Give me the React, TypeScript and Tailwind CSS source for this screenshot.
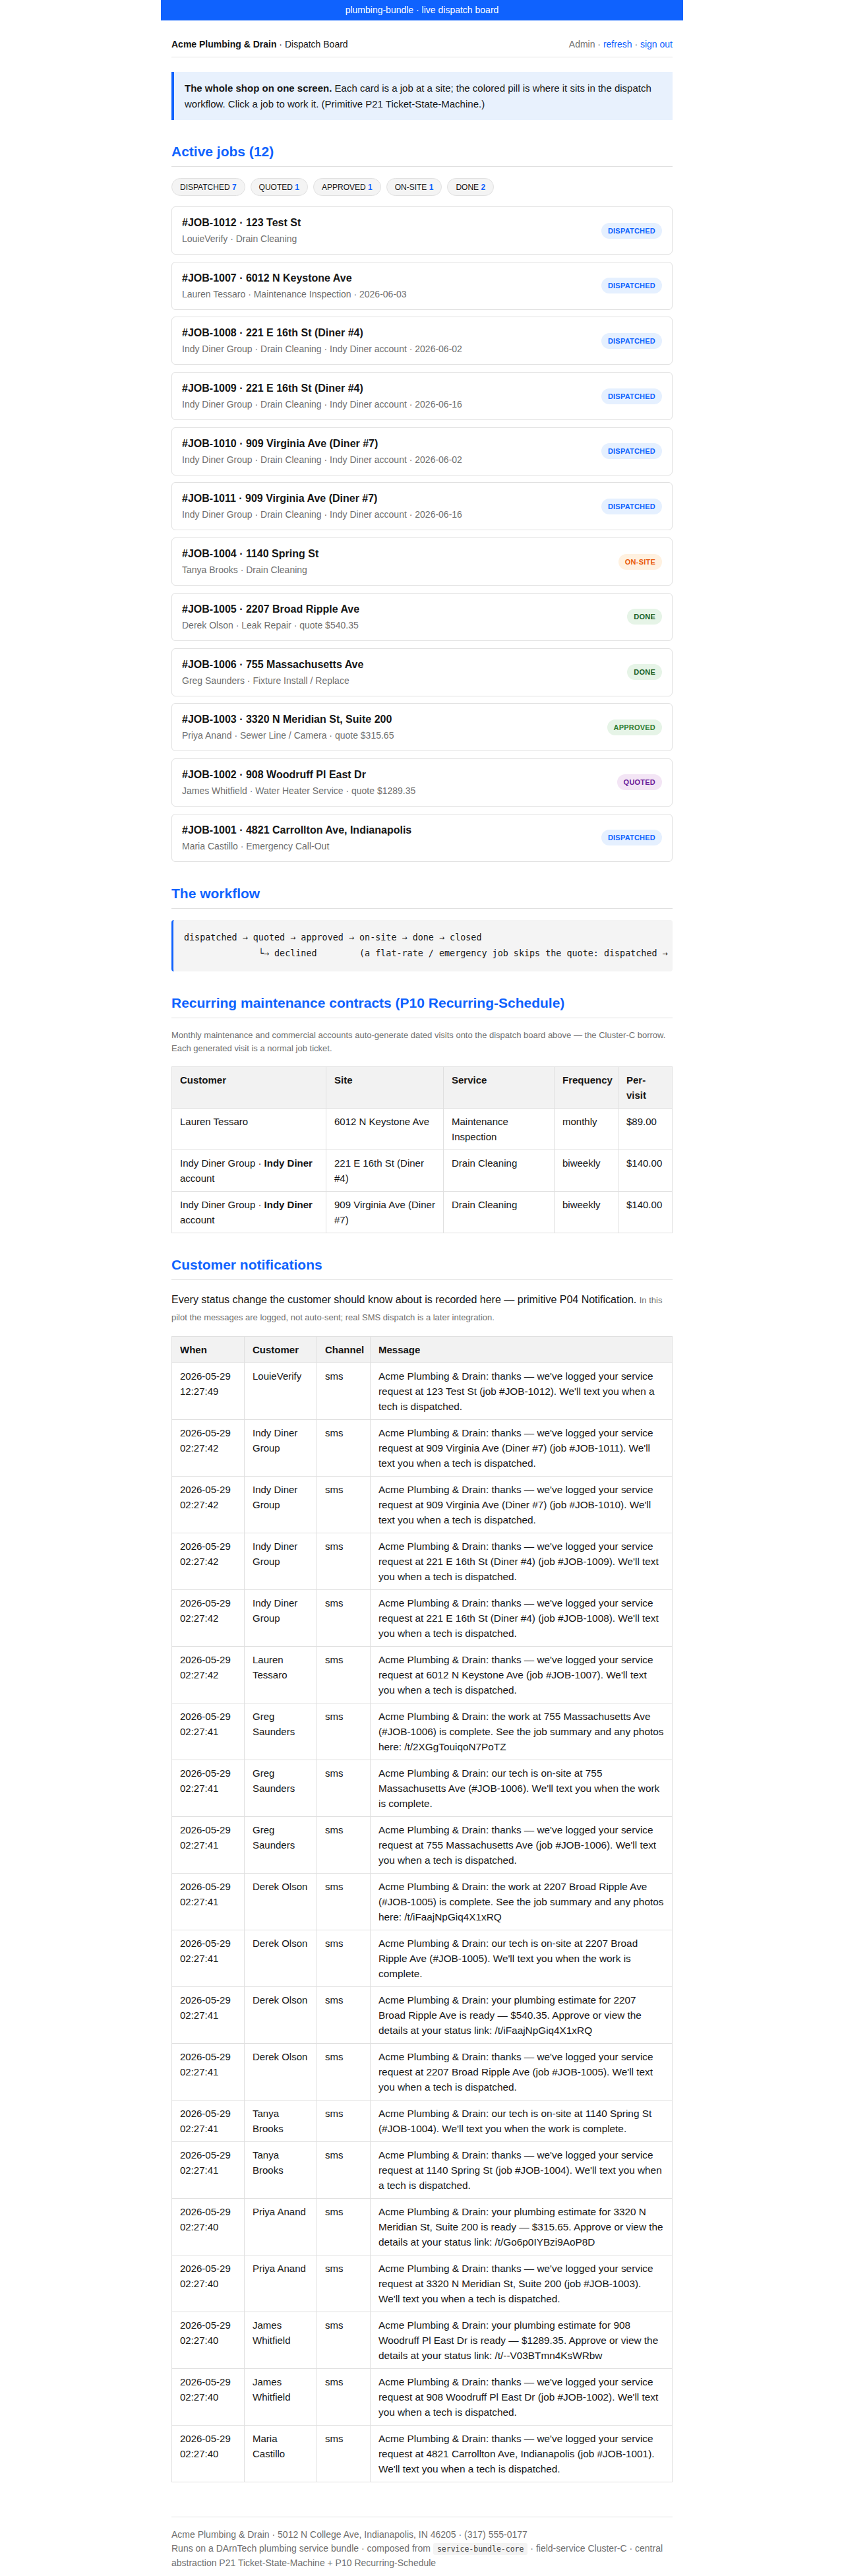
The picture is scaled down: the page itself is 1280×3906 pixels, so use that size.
type Status = 'dispatched' | 'quoted' | 'approved' | 'on-site' | 'done'

interface Job {
  id: string
  site: string
  meta: string
  status: Status
}

interface Contract {
  customer: string
  account?: string
  site: string
  service: string
  frequency: string
  price: string
}

interface Notice {
  when: string
  customer: string
  message: string
}

const pillStyles: Record<Status, string> = {
  dispatched: 'bg-[#e5f0ff] text-[#0f62fe]',
  quoted: 'bg-[#f3e5f5] text-[#6a1b9a]',
  approved: 'bg-[#e6f4e7] text-[#2e7d32]',
  'on-site': 'bg-[#fff1e0] text-[#e8590c]',
  done: 'bg-[#e6f4e7] text-[#1b5e20]',
}

const counts = [
  { label: 'Dispatched', n: 7 },
  { label: 'Quoted', n: 1 },
  { label: 'Approved', n: 1 },
  { label: 'On-site', n: 1 },
  { label: 'Done', n: 2 },
]

const jobs: Job[] = [
  { id: '#JOB-1012', site: '123 Test St', meta: 'LouieVerify · Drain Cleaning', status: 'dispatched' },
  { id: '#JOB-1007', site: '6012 N Keystone Ave', meta: 'Lauren Tessaro · Maintenance Inspection · 2026-06-03', status: 'dispatched' },
  { id: '#JOB-1008', site: '221 E 16th St (Diner #4)', meta: 'Indy Diner Group · Drain Cleaning · Indy Diner account · 2026-06-02', status: 'dispatched' },
  { id: '#JOB-1009', site: '221 E 16th St (Diner #4)', meta: 'Indy Diner Group · Drain Cleaning · Indy Diner account · 2026-06-16', status: 'dispatched' },
  { id: '#JOB-1010', site: '909 Virginia Ave (Diner #7)', meta: 'Indy Diner Group · Drain Cleaning · Indy Diner account · 2026-06-02', status: 'dispatched' },
  { id: '#JOB-1011', site: '909 Virginia Ave (Diner #7)', meta: 'Indy Diner Group · Drain Cleaning · Indy Diner account · 2026-06-16', status: 'dispatched' },
  { id: '#JOB-1004', site: '1140 Spring St', meta: 'Tanya Brooks · Drain Cleaning', status: 'on-site' },
  { id: '#JOB-1005', site: '2207 Broad Ripple Ave', meta: 'Derek Olson · Leak Repair · quote $540.35', status: 'done' },
  { id: '#JOB-1006', site: '755 Massachusetts Ave', meta: 'Greg Saunders · Fixture Install / Replace', status: 'done' },
  { id: '#JOB-1003', site: '3320 N Meridian St, Suite 200', meta: 'Priya Anand · Sewer Line / Camera · quote $315.65', status: 'approved' },
  { id: '#JOB-1002', site: '908 Woodruff Pl East Dr', meta: 'James Whitfield · Water Heater Service · quote $1289.35', status: 'quoted' },
  { id: '#JOB-1001', site: '4821 Carrollton Ave, Indianapolis', meta: 'Maria Castillo · Emergency Call-Out', status: 'dispatched' },
]

const contracts: Contract[] = [
  { customer: 'Lauren Tessaro', site: '6012 N Keystone Ave', service: 'Maintenance Inspection', frequency: 'monthly', price: '$89.00' },
  { customer: 'Indy Diner Group', account: 'Indy Diner', site: '221 E 16th St (Diner #4)', service: 'Drain Cleaning', frequency: 'biweekly', price: '$140.00' },
  { customer: 'Indy Diner Group', account: 'Indy Diner', site: '909 Virginia Ave (Diner #7)', service: 'Drain Cleaning', frequency: 'biweekly', price: '$140.00' },
]

const shop = 'Acme Plumbing & Drain'
const logged = (site: string, job: string) =>
  `${shop}: thanks — we've logged your service request at ${site} (job ${job}). We'll text you when a tech is dispatched.`
const onSite = (site: string, job: string) =>
  `${shop}: our tech is on-site at ${site} (${job}). We'll text you when the work is complete.`
const complete = (site: string, job: string, link: string) =>
  `${shop}: the work at ${site} (${job}) is complete. See the job summary and any photos here: ${link}`
const estimate = (site: string, amount: string, link: string) =>
  `${shop}: your plumbing estimate for ${site} is ready — ${amount}. Approve or view the details at your status link: ${link}`

const notices: Notice[] = [
  { when: '2026-05-29 12:27:49', customer: 'LouieVerify', message: logged('123 Test St', '#JOB-1012') },
  { when: '2026-05-29 02:27:42', customer: 'Indy Diner Group', message: logged('909 Virginia Ave (Diner #7)', '#JOB-1011') },
  { when: '2026-05-29 02:27:42', customer: 'Indy Diner Group', message: logged('909 Virginia Ave (Diner #7)', '#JOB-1010') },
  { when: '2026-05-29 02:27:42', customer: 'Indy Diner Group', message: logged('221 E 16th St (Diner #4)', '#JOB-1009') },
  { when: '2026-05-29 02:27:42', customer: 'Indy Diner Group', message: logged('221 E 16th St (Diner #4)', '#JOB-1008') },
  { when: '2026-05-29 02:27:42', customer: 'Lauren Tessaro', message: logged('6012 N Keystone Ave', '#JOB-1007') },
  { when: '2026-05-29 02:27:41', customer: 'Greg Saunders', message: complete('755 Massachusetts Ave', '#JOB-1006', '/t/2XGgTouiqoN7PoTZ') },
  { when: '2026-05-29 02:27:41', customer: 'Greg Saunders', message: onSite('755 Massachusetts Ave', '#JOB-1006') },
  { when: '2026-05-29 02:27:41', customer: 'Greg Saunders', message: logged('755 Massachusetts Ave', '#JOB-1006') },
  { when: '2026-05-29 02:27:41', customer: 'Derek Olson', message: complete('2207 Broad Ripple Ave', '#JOB-1005', '/t/iFaajNpGiq4X1xRQ') },
  { when: '2026-05-29 02:27:41', customer: 'Derek Olson', message: onSite('2207 Broad Ripple Ave', '#JOB-1005') },
  { when: '2026-05-29 02:27:41', customer: 'Derek Olson', message: estimate('2207 Broad Ripple Ave', '$540.35', '/t/iFaajNpGiq4X1xRQ') },
  { when: '2026-05-29 02:27:41', customer: 'Derek Olson', message: logged('2207 Broad Ripple Ave', '#JOB-1005') },
  { when: '2026-05-29 02:27:41', customer: 'Tanya Brooks', message: onSite('1140 Spring St', '#JOB-1004') },
  { when: '2026-05-29 02:27:41', customer: 'Tanya Brooks', message: logged('1140 Spring St', '#JOB-1004') },
  { when: '2026-05-29 02:27:40', customer: 'Priya Anand', message: estimate('3320 N Meridian St, Suite 200', '$315.65', '/t/Go6p0IYBzi9AoP8D') },
  { when: '2026-05-29 02:27:40', customer: 'Priya Anand', message: logged('3320 N Meridian St, Suite 200', '#JOB-1003') },
  { when: '2026-05-29 02:27:40', customer: 'James Whitfield', message: estimate('908 Woodruff Pl East Dr', '$1289.35', '/t/--V03BTmn4KsWRbw') },
  { when: '2026-05-29 02:27:40', customer: 'James Whitfield', message: logged('908 Woodruff Pl East Dr', '#JOB-1002') },
  { when: '2026-05-29 02:27:40', customer: 'Maria Castillo', message: logged('4821 Carrollton Ave, Indianapolis', '#JOB-1001') },
]

const workflow = [
  'dispatched → quoted → approved → on-site → done → closed',
  '              └→ declined        (a flat-rate / emergency job skips the quote: dispatched → on-site)',
].join('\n')

function SectionTitle({ children }: { children: React.ReactNode }) {
  return (
    <h2 className="mt-[34px] border-b border-[#e0e0e0] pb-2 text-[21px] font-bold leading-7 text-[#0f62fe]">
      {children}
    </h2>
  )
}

const th = 'border border-[#e0e0e0] bg-[#f2f2f2] px-3 py-2 text-left align-top font-bold'
const td = 'border border-[#e0e0e0] px-3 py-2 align-top'

export default function App() {
  return (
    <div className="min-h-screen bg-white font-['Liberation_Sans',Arial,sans-serif] text-[#161616]">
      {/* top banner */}
      <div className="mx-auto flex h-[31px] w-[792px] items-center justify-center bg-[#0f62fe] text-[14px] text-white">
        plumbing-bundle · live dispatch board
      </div>

      <div className="mx-auto max-w-[800px] px-5 pb-4">
        <header className="flex items-center justify-between border-b border-[#e0e0e0] pt-[26px] pb-[9px] text-[14px] leading-5">
          <div>
            <span className="font-bold">Acme Plumbing &amp; Drain</span> · Dispatch Board
          </div>
          <div className="text-[#6f6f6f]">
            Admin · <a className="text-[#0f62fe]">refresh</a> · <a className="text-[#0f62fe]">sign out</a>
          </div>
        </header>

        <div className="mt-[22px] border-l-4 border-[#0f62fe] bg-[#e8f1fd] px-4 pt-[13px] pb-[12px] text-[15px] leading-6">
          <b>The whole shop on one screen.</b> Each card is a job at a site; the colored pill is where it sits in the
          dispatch workflow. Click a job to work it. (Primitive P21 Ticket-State-Machine.)
        </div>

        {/* board */}
        <SectionTitle>Active jobs ({jobs.length})</SectionTitle>
        <div className="mt-[17px] flex flex-wrap gap-2">
          {counts.map((c) => (
            <span
              key={c.label}
              className="flex h-[27px] items-center rounded-full border border-[#e0e0e0] bg-[#f4f4f4] px-3 text-[12px] uppercase"
            >
              {c.label}&nbsp;<b className="text-[#0f62fe]">{c.n}</b>
            </span>
          ))}
        </div>

        <div className="mt-4 flex flex-col gap-[10.7px]">
          {jobs.map((job) => (
            <div
              key={job.id}
              className="flex cursor-pointer items-center justify-between rounded-md border border-[#e0e0e0] bg-white px-[15px] py-[13px] hover:border-[#0f62fe]"
            >
              <div>
                <div className="text-[16px] font-bold leading-[22px]">
                  {job.id} · {job.site}
                </div>
                <div className="mt-[3px] text-[14px] leading-5 text-[#6f6f6f]">{job.meta}</div>
              </div>
              <span
                className={`rounded-full px-[10px] py-1 text-[11px] font-bold uppercase leading-4 tracking-[0.02em] ${pillStyles[job.status]}`}
              >
                {job.status}
              </span>
            </div>
          ))}
        </div>

        {/* state machine */}
        <SectionTitle>The workflow</SectionTitle>
        <pre className="mt-[17px] overflow-hidden whitespace-pre rounded-[4px] border-l-[3px] border-[#0f62fe] bg-[#f4f4f4] px-4 py-[15px] font-['DejaVu_Sans_Mono',monospace] text-[13.4px] leading-6">
          {workflow}
        </pre>

        {/* recurring schedule */}
        <SectionTitle>Recurring maintenance contracts (P10 Recurring-Schedule)</SectionTitle>
        <p className="mt-4 text-[13px] leading-5 text-[#6f6f6f]">
          Monthly maintenance and commercial accounts auto-generate dated visits onto the dispatch board above — the
          Cluster-C borrow. Each generated visit is a normal job ticket.
        </p>
        <table className="mt-[17px] w-full table-fixed border-collapse text-[15px] leading-[23px]">
          <colgroup>
            <col className="w-[234px]" />
            <col className="w-[178px]" />
            <col className="w-[168px]" />
            <col className="w-[97px]" />
            <col className="w-[82px]" />
          </colgroup>
          <thead>
            <tr>
              <th className={th}>Customer</th>
              <th className={th}>Site</th>
              <th className={th}>Service</th>
              <th className={th}>Frequency</th>
              <th className={th}>Per-visit</th>
            </tr>
          </thead>
          <tbody>
            {contracts.map((c, i) => (
              <tr key={i}>
                <td className={td}>
                  {c.customer}
                  {c.account && (
                    <>
                      {' · '}
                      <b>{c.account}</b> account
                    </>
                  )}
                </td>
                <td className={td}>{c.site}</td>
                <td className={td}>{c.service}</td>
                <td className={td}>{c.frequency}</td>
                <td className={td}>{c.price}</td>
              </tr>
            ))}
          </tbody>
        </table>

        {/* notification log */}
        <SectionTitle>Customer notifications</SectionTitle>
        <p className="mt-[17px] text-[16px] leading-[25.6px]">
          Every status change the customer should know about is recorded here — primitive P04 Notification.{' '}
          <span className="text-[13px] text-[#6f6f6f]">
            In this pilot the messages are logged, not auto-sent; real SMS dispatch is a later integration.
          </span>
        </p>
        <table className="mt-[15px] w-full table-fixed border-collapse text-[15px] leading-[23px]">
          <colgroup>
            <col className="w-[110px]" />
            <col className="w-[110px]" />
            <col className="w-[81px]" />
            <col />
          </colgroup>
          <thead>
            <tr>
              <th className={th}>When</th>
              <th className={th}>Customer</th>
              <th className={th}>Channel</th>
              <th className={th}>Message</th>
            </tr>
          </thead>
          <tbody>
            {notices.map((n, i) => (
              <tr key={i}>
                <td className={td}>{n.when}</td>
                <td className={td}>{n.customer}</td>
                <td className={td}>sms</td>
                <td className={`${td} text-[15.35px]`}>{n.message}</td>
              </tr>
            ))}
          </tbody>
        </table>

        <footer className="mt-[52px] border-t border-[#e0e0e0] pt-4 text-[14px] leading-[21px] text-[#6f6f6f]">
          <div>Acme Plumbing &amp; Drain · 5012 N College Ave, Indianapolis, IN 46205 · (317) 555-0177</div>
          <div>
            Runs on a DArnTech plumbing service bundle · composed from{' '}
            <code className="rounded-[3px] bg-[#f4f4f4] px-[6px] py-[2px] font-['DejaVu_Sans_Mono',monospace] text-[11.5px] text-[#393939]">
              service-bundle-core
            </code>{' '}
            · field-service Cluster-C · central abstraction P21 Ticket-State-Machine + P10 Recurring-Schedule
          </div>
        </footer>
      </div>
    </div>
  )
}
